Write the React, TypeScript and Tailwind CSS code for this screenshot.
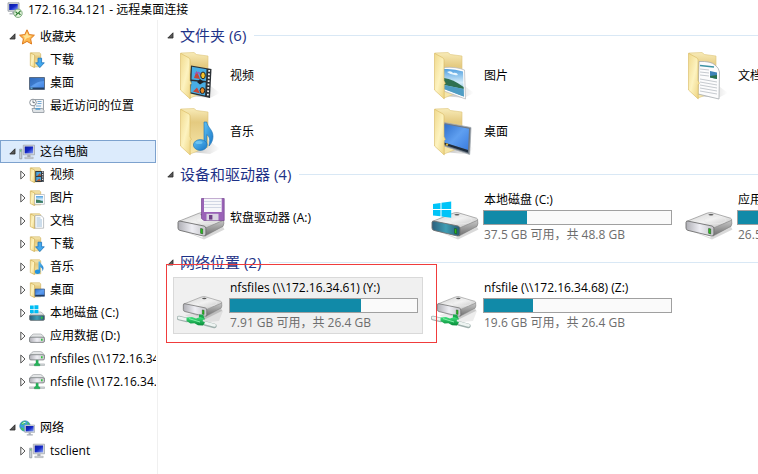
import type { ReactNode } from "react";
import clsx from "clsx";

/* ─── Shared gradients ─── */
function Gradients() {
  return (
    <svg className="absolute h-0 w-0" aria-hidden="true">
      <defs>
        <linearGradient id="flap" x1="0" y1="0" x2="1" y2="1">
          <stop offset="0" stopColor="#f0d98c" />
          <stop offset="0.5" stopColor="#fdf3c0" />
          <stop offset="1" stopColor="#ecd07a" />
        </linearGradient>
        <linearGradient id="back" x1="0" y1="0" x2="0" y2="1">
          <stop offset="0" stopColor="#f8ebb8" />
          <stop offset="0.3" stopColor="#e4ca80" />
          <stop offset="1" stopColor="#f8e9ae" />
        </linearGradient>
        <linearGradient id="screen" x1="0" y1="0" x2="1" y2="1">
          <stop offset="0" stopColor="#2f6fcb" />
          <stop offset="0.5" stopColor="#5f9ff0" />
          <stop offset="1" stopColor="#3a7ce0" />
        </linearGradient>
        <linearGradient id="monitor" x1="0" y1="0" x2="1" y2="1">
          <stop offset="0" stopColor="#0a1a9c" />
          <stop offset="0.5" stopColor="#1428c8" />
          <stop offset="1" stopColor="#8ba4f6" />
        </linearGradient>
        <linearGradient id="metal" x1="0" y1="0" x2="1" y2="1">
          <stop offset="0" stopColor="#cfcfcf" />
          <stop offset="0.5" stopColor="#f2f2f2" />
          <stop offset="1" stopColor="#b9b9b9" />
        </linearGradient>
        <linearGradient id="side" x1="0" y1="0" x2="0" y2="1">
          <stop offset="0" stopColor="#c9c9c9" />
          <stop offset="1" stopColor="#6f6f6f" />
        </linearGradient>
        <linearGradient id="front" x1="0" y1="0" x2="1" y2="0">
          <stop offset="0" stopColor="#aeaeb4" />
          <stop offset="0.5" stopColor="#eeeef4" />
          <stop offset="1" stopColor="#c4c4c8" />
        </linearGradient>
        <linearGradient id="teal" x1="0" y1="0" x2="1" y2="0">
          <stop offset="0" stopColor="#2c5f7c" />
          <stop offset="0.5" stopColor="#3e9db4" />
          <stop offset="1" stopColor="#2a5a70" />
        </linearGradient>
        <linearGradient id="sky" x1="0" y1="0" x2="0" y2="1">
          <stop offset="0" stopColor="#4f9fe0" />
          <stop offset="0.5" stopColor="#d3ecfa" />
          <stop offset="1" stopColor="#3d8fbe" />
        </linearGradient>
        <linearGradient id="shade" x1="0" y1="0" x2="1" y2="0">
          <stop offset="0" stopColor="#000" stopOpacity="0.25" />
          <stop offset="1" stopColor="#000" stopOpacity="0" />
        </linearGradient>
        <linearGradient id="note" x1="0" y1="0" x2="1" y2="1">
          <stop offset="0" stopColor="#5ec1f4" />
          <stop offset="1" stopColor="#1a78c8" />
        </linearGradient>
        <linearGradient id="pipe" x1="0" y1="0" x2="0" y2="1">
          <stop offset="0" stopColor="#3fe07c" />
          <stop offset="1" stopColor="#078a38" />
        </linearGradient>
      </defs>
    </svg>
  );
}

/* ─── Small icons (16px) ─── */
function Small({ children }: { children: ReactNode }) {
  return (
    <svg viewBox="0 0 16 16" className="h-4 w-4 shrink-0" aria-hidden="true">
      {children}
    </svg>
  );
}

function SmallFolder({ children }: { children: ReactNode }) {
  return (
    <Small>
      <path d="M2 .8h8.5l1.2 1v13H4z" fill="url(#back)" stroke="#cfae58" strokeWidth=".6" />
      <path d="M1.3.8 5.6 3v12.6L1.3 13.6z" fill="url(#flap)" stroke="#cda94b" strokeWidth=".6" />
      {children}
    </Small>
  );
}

const Star = () => (
  <Small>
    <path d="m8 .8 2.2 4.8 5.2.6-3.8 3.6 1 5.2L8 12.4 3.4 15l1-5.2L.6 6.2l5.2-.6z" fill="#fcb64e" stroke="#df7a1c" />
    <path d="m8 3 1.4 3.4 3.2.4-2.7 2L8 9 5 12l.7-3.2-2-2.2 2.7-.2z" fill="#ffe293" />
  </Small>
);
const DownloadSmall = () => (
  <SmallFolder>
    <path d="M9 6.2h3.6v4.6h2.7L10.8 15.6 6.6 10.8H9z" fill="#42a8ee" stroke="#1d73bd" strokeWidth=".8" />
  </SmallFolder>
);
const DesktopSmall = () => (
  <Small>
    <path d="M.5 2.5h15v12H.5z" fill="url(#screen)" stroke="#5a6c84" />
    <path d="M1 12.5h14v1.6H1z" fill="#234064" />
    <path d="M1.5 12.7h2v1h-2z" fill="#7fd5f5" />
    <path d="M1 3h14v3Q8 6 1 12z" fill="#2d68b8" opacity=".6" />
  </Small>
);
const RecentSmall = () => (
  <Small>
    <path d="M5.2 1.5h9.3v10.8H5.2z" fill="#f4f6f8" stroke="#9ba3aa" />
    <path d="M8.5 3.5h4M8.5 5.5h4M7 8h5" stroke="#76a9d3" />
    <path d="M3 10.5h10.5l1.5 2v2H4z" fill="#dfe3e6" stroke="#8d959d" strokeWidth=".8" />
    <path d="M6.5 10h4.8v1.8H6.5z" fill="#5a9fcf" />
    <circle cx="4" cy="4.5" r="3.3" fill="#fff" stroke="#8b9299" />
    <path d="M4 2.4v2.3h2" fill="none" stroke="#4a5862" strokeWidth=".8" />
  </Small>
);
const ComputerSmall = () => (
  <Small>
    <path d="M.7 5.2h2.1v9.6H.7z" fill="#d4d9dd" stroke="#838b93" strokeWidth=".7" />
    <path d="M1.2 6.2h1.1v1.2H1.2z" fill="#35bd57" />
    <path d="M4.3 1.2h11.2v9.6H4.3z" fill="#d7dade" stroke="#9a9fa6" strokeWidth=".7" />
    <path d="M5.7 2.5h8.4v6.9H5.7z" fill="url(#monitor)" />
    <path d="M8.3 10.8h3.2v2.4H8.3z" fill="#a8adb4" />
    <path d="M5.8 13.2h8.4v1.4H5.8z" fill="#d5d8db" stroke="#979ca3" strokeWidth=".5" />
  </Small>
);
const RemoteIcon = () => (
  <Small>
    <path d="M1 .8h11v8.4H1z" fill="#d7dade" stroke="#8f959d" strokeWidth=".8" />
    <path d="M2.2 2h8.6v6H2.2z" fill="url(#monitor)" />
    <path d="M5 9.2h3v2H5zM2.5 11h6v1.5h-6z" fill="#b7bcc2" />
    <circle cx="11" cy="11.3" r="4.2" fill="#e4f4dc" stroke="#58915a" strokeWidth=".7" />
    <path d="m8.5 9.6 2 2-2 2M13.5 8.9l-2 2 2 2" fill="none" stroke="#2d7b32" strokeWidth="1.2" />
  </Small>
);
const VideoSmall = () => (
  <SmallFolder>
    <path d="M6.2 4h8.6v11H6.2z" fill="#333a42" />
    <path d="M7.2 5h4.8v4H7.2zM7.2 10h4.8v4H7.2z" fill="#4aa6dc" />
    <path d="m8 9 3-3 1 3zM7.5 14l3-2.5 1.5 2.5z" fill="#b4572e" />
    <path d="M13.6 4.6v10" stroke="#e6e6e6" strokeWidth="1.1" strokeDasharray="1.2 1.2" />
  </SmallFolder>
);
const PictureSmall = () => (
  <SmallFolder>
    <path d="M5.6 4.5h9.8v9.8H5.6z" fill="#fff" stroke="#a4aab0" strokeWidth=".6" />
    <path d="M7 6h7v6.8H7z" fill="url(#sky)" />
    <path d="M7 9.6q3 0 7 2v1.2H7z" fill="#3e7c5c" />
  </SmallFolder>
);
const DocSmall = () => (
  <SmallFolder>
    <path d="M6 2.6h6l2.6 2.2v10.4H6z" fill="#fff" stroke="#a2a7ad" strokeWidth=".7" />
    <path d="M7.5 5h4M7.5 7h5.5M7.5 9h5.5M7.5 11h5.5M7.5 13h5.5" stroke="#8fb3d4" strokeWidth=".9" />
  </SmallFolder>
);
const MusicSmall = () => (
  <SmallFolder>
    <path d="M9.5 2.5h1.6c.2 2.8 3.4 3.6 3.4 6.6 0 1.4-.5 2.4-1.2 3.2.5-2.6-.5-3.6-2.1-4.4v4.5H9.5z" fill="url(#note)" />
    <ellipse cx="8.6" cy="12.7" rx="2.7" ry="2.2" fill="#2593dc" />
  </SmallFolder>
);
const DesktopFolderSmall = () => (
  <SmallFolder>
    <path d="M6 7h9.5v7.3H6z" fill="url(#screen)" stroke="#42597d" strokeWidth=".7" />
    <path d="M6.3 12.8h9v1.3h-9z" fill="#223d63" />
  </SmallFolder>
);

function SmallDrive({ y = 0, face = "url(#front)" }: { y?: number; face?: string }) {
  return (
    <g transform={`translate(0 ${y})`}>
      <path d="m3 4.8 1.6-.8h7l1.6.8 2.2 2.7v.8H.6v-.8z" fill="#e3e5e6" stroke="#9b9ea1" strokeWidth=".6" />
      <rect x=".5" y="7.2" width="15" height="5.2" rx="1.4" fill={face} stroke="#74787b" strokeWidth=".8" />
      <path d="M12 8.8h1.6v2H12z" fill="#2fc63c" />
    </g>
  );
}
const SystemDriveSmall = () => (
  <Small>
    <SmallDrive y={3} face="url(#teal)" />
    <path d="M1 .5h3.7v3.6H1zM5.4.2h4v3.9h-4zM1 4.8h3.7v3.4H1zM5.4 4.8h4v3.5h-4z" fill="#00bdf4" />
  </Small>
);
const DriveSmall = () => (
  <Small>
    <SmallDrive y={2} />
  </Small>
);
const NetDriveSmall = () => (
  <Small>
    <SmallDrive y={-3.5} />
    <path d="M.5 12.9h15v1.6H.5z" fill="#d3d7d9" stroke="#9aa1a4" strokeWidth=".5" />
    <path d="M7 9.2h2.2v3l1.6 1v1.6H5.4v-1.6l1.6-1z" fill="#24b65a" stroke="#188a45" strokeWidth=".4" />
  </Small>
);
const NetworkSmall = () => (
  <Small>
    <circle cx="6" cy="6" r="5.3" fill="#3ba0dc" stroke="#2a77a8" strokeWidth=".5" />
    <path d="M2 3.5Q4 .8 7 1.2L5.5 4 3 5zM1.6 7l3 1.4L5 11Q2 10 1.6 7zM8 2l2.4 1.5-1.6 1.8z" fill="#45c653" />
    <path d="M3.5 3.5q1.5-1.5 3-1" stroke="#d5f5ff" fill="none" />
    <path d="M5.8 5h9.8v7.4H5.8z" fill="#d7dbe0" stroke="#979da5" strokeWidth=".6" />
    <path d="M6.8 6h7.8v5.4H6.8z" fill="url(#monitor)" />
    <path d="M9.6 12.4h2.2v1.8h2v1.2H7.8v-1.2h1.8z" fill="#a9b0bc" />
  </Small>
);

/* ─── Large icons (48px) ─── */
function Large({ children }: { children: ReactNode }) {
  return (
    <svg viewBox="0 0 48 48" className="h-12 w-12 shrink-0" aria-hidden="true">
      {children}
    </svg>
  );
}

function LargeFolder({ children }: { children: ReactNode }) {
  return (
    <Large>
      <path d="M31 32 43 41 33 46 14 44z" fill="url(#shade)" />
      <path d="m4 1 13-.5 2.5 2L31 4v35L13 46z" fill="url(#back)" stroke="#dec478" strokeWidth=".6" />
      {children}
      <path d="M3.5 1.2 12 6q1 .6 1 2v20.5l1.4 3-1.2 1V47L3.5 38z" fill="url(#flap)" stroke="#d9b85f" strokeWidth=".6" />
    </Large>
  );
}

const VideoFolder = () => (
  <LargeFolder>
    <path d="M14 13.5 34.5 17 33 46 11 41z" fill="#2b3136" />
    <path d="M15 14.8 29.5 17.3 29 29 14.5 27.5zM14.5 29 28.8 30.6 28 43.6 13.5 40.2z" fill="#48aee4" />
    <path d="m17 26 2.5-7 2.5 5 1 3zM16 39.5l4-4 3 6z" fill="#c4463a" />
    <path d="M18 22q4-4 6 2" fill="none" stroke="#9a58b8" strokeWidth="1.5" />
    <ellipse cx="26" cy="23.4" rx="2.3" ry="3.4" fill="#f6c52c" stroke="#202428" strokeWidth="1" />
    <ellipse cx="25.4" cy="38.6" rx="2.3" ry="3" fill="#e28a27" stroke="#202428" strokeWidth="1" />
    <path d="m20 30 3-3 4 3-4 2.5z" fill="#202428" />
    <path d="M32.2 18 30.8 45" stroke="#f2f2f2" strokeWidth="1.8" strokeDasharray="1.8 1.6" />
  </LargeFolder>
);
const PictureFolder = () => (
  <LargeFolder>
    <path d="M13 15.5q12-1 20.5 2.5l1 29L13 39z" fill="#fcfcfc" stroke="#b1b6ba" strokeWidth=".7" />
    <path d="M13 17q10-.6 19 2.4l.8 25L13 37z" fill="url(#sky)" />
    <path d="M13 26q9 1 19.6 9l.1 2L13 33z" fill="#2f7050" />
    <path d="m13 33 19.7 4 .1 7.4L13 37z" fill="#4f9dc4" />
    <path d="M16 20q4-2 6 1 4-1 5 2-6 1-11-3z" fill="#eaf7fe" />
  </LargeFolder>
);
const DocFolder = () => (
  <LargeFolder>
    <path d="M14 9.5q12-.5 16 3.5 4 3 4.5 7L34 47 13 42z" fill="#fcfcfd" stroke="#a7acb0" strokeWidth=".8" />
    <path d="M15 13.5 29 15" stroke="#3c93a3" strokeWidth="1.6" />
    <path d="m15 17 9 1m-9 2 9 1m-9 2 9 1m-9 3 17 3m-17 0 17 3m-17 0 17 3m-17 0 17 3m-17 0 17 3" stroke="#b8bdc3" strokeWidth=".8" />
    <path d="m25 19 7 1.6V27l-7-1.6z" fill="#3e83b8" />
    <path d="m25 24 7-1v4l-7-1.6z" fill="#29704c" />
  </LargeFolder>
);
const MusicFolder = () => (
  <LargeFolder>
    <path d="M27 14h2.8C30.5 19.5 36 21.5 36 28.5c0 4-1.8 7-4 9.5 1.5-6 .5-9.6-2.2-11.4V37l-2.8 1z" fill="url(#note)" stroke="#176fb2" strokeWidth=".6" />
    <ellipse cx="23.3" cy="37" rx="6.9" ry="5.4" fill="url(#note)" stroke="#176fb2" strokeWidth=".6" />
    <ellipse cx="22" cy="34.5" rx="3.5" ry="1.6" fill="#7dcdf5" opacity=".7" />
  </LargeFolder>
);
const DesktopFolder = () => (
  <LargeFolder>
    <path d="m13 14.5 27 5L38.7 46.5 13 38z" fill="#6d7783" stroke="#a6adb4" strokeWidth=".8" />
    <path d="m13 16 25 4.8L37 42 13 34.5z" fill="url(#screen)" />
    <path d="m13 34.5 24 7.5-.1 2.6L13 36.6z" fill="#1d2c3d" />
    <circle cx="16" cy="36.6" r="1.2" fill="#d8b43c" />
  </LargeFolder>
);

function DriveBody({ face = "url(#front)" }: { face?: string }) {
  return (
    <g>
      <path d="m4 36 21 7.5L46 33l1.5 2.5L27 45.5z" fill="#000" opacity=".15" />
      <path d="m28 33 18.6-7q.8 4-.6 6.4L28 42z" fill="url(#side)" stroke="#777" strokeWidth=".6" />
      <path d="M1.5 27.4 22 19.2q2.5-.9 5-.5l18.5 5.5q2 1 .8 2.2L29 33.8z" fill="url(#metal)" stroke="#8d8d8d" strokeWidth=".7" />
      <ellipse cx="30" cy="26.2" rx="11" ry="3.6" fill="none" stroke="#e9e9e9" strokeWidth=".8" />
      <ellipse cx="26" cy="20.8" rx="2.6" ry=".8" fill="#555" />
      <path d="M1 28.4q.2-1.6 2-1.3L27 32q2 .6 1.9 2.6V40q-.1 2.6-2.6 2L3 36.4Q1 36 1 34z" fill={face} stroke="#717171" strokeWidth=".9" />
      <path d="m23.6 34.4 2.1.5v5l-2.1-.6z" fill="#27c41b" stroke="#1b3d18" strokeWidth=".5" />
    </g>
  );
}

const FloppyDrive = () => (
  <Large>
    <DriveBody />
    <path d="M24.5 4.5h22.7v22H27l-2.5-2z" fill="#9a63b7" stroke="#744590" strokeWidth=".7" />
    <path d="M27 4.5h17.7V18H27z" fill="#f6f7fa" />
    <path d="M27 7.5h17.7M27 10.5h17.7M27 13.5h17.7" stroke="#c8cede" strokeWidth=".8" />
    <path d="M29.5 19.8h12v6.5h-12z" fill="#d9d4e2" />
    <path d="M32 21h3.4v4.6H32z" fill="#6f4187" />
  </Large>
);
const SystemDrive = () => (
  <Large>
    <DriveBody face="url(#teal)" />
    <path d="m2 10 7.5-1.1V15H2zM10.5 8.7 20.2 7.4V15h-9.7zM2 16h7.5v6.3L2 21.4zM10.5 16h9.7v7.8l-9.7-1.3z" fill="#00c4f8" />
  </Large>
);
const Drive = () => (
  <Large>
    <DriveBody />
  </Large>
);
const NetDrive = () => (
  <Large>
    <path d="m8 33 32-7 6 3-4 10-20 2z" fill="#000" opacity=".07" />
    <g transform="translate(5.5 -1) scale(.84)">
      <DriveBody />
    </g>
    <path d="M22 32.5h4l2 5h-6z" fill="#1bab4e" />
    <path d="m2 36 8 2M28 41.5l9.5 2.5" stroke="#9fb0ad" strokeWidth="4.4" strokeLinecap="round" />
    <path d="m2 35.8 8 1.8M28 40.9l9.5 2.5" stroke="#eef4f2" strokeWidth="2.8" strokeLinecap="round" />
    <path d="m9.5 35.4 5.5-.4 4 1.4 4-1.4 4 1.4-1.5 2.6 2.5 1.5-2 3-5-.2-3.5-2-4 .2-4-2.4z" fill="url(#pipe)" />
    <path d="m12 36.6 11 3.4" stroke="#7ef0a6" />
  </Large>
);

/* ─── Sidebar ─── */
const tree = [
  {
    label: "收藏夹",
    Icon: Star,
    arrows: false,
    items: [
      { label: "下载", Icon: DownloadSmall },
      { label: "桌面", Icon: DesktopSmall },
      { label: "最近访问的位置", Icon: RecentSmall },
    ],
  },
  {
    label: "这台电脑",
    Icon: ComputerSmall,
    arrows: true,
    selected: true,
    items: [
      { label: "视频", Icon: VideoSmall },
      { label: "图片", Icon: PictureSmall },
      { label: "文档", Icon: DocSmall },
      { label: "下载", Icon: DownloadSmall },
      { label: "音乐", Icon: MusicSmall },
      { label: "桌面", Icon: DesktopFolderSmall },
      { label: "本地磁盘 (C:)", Icon: SystemDriveSmall },
      { label: "应用数据 (D:)", Icon: DriveSmall },
      { label: "nfsfiles (\\\\172.16.34.61) (Y:)", Icon: NetDriveSmall },
      { label: "nfsfile (\\\\172.16.34.68) (Z:)", Icon: NetDriveSmall },
    ],
  },
  {
    label: "网络",
    Icon: NetworkSmall,
    arrows: true,
    items: [{ label: "tsclient", Icon: ComputerSmall }],
  },
];

function OpenArrow() {
  return (
    <svg viewBox="0 0 7 7" className="h-[7px] w-[7px] shrink-0" aria-hidden="true">
      <path d="M6 .8V6H.8z" fill="#595959" stroke="#262626" strokeWidth=".8" />
    </svg>
  );
}

function ClosedArrow() {
  return (
    <svg viewBox="0 0 6 10" className="h-[10px] w-[6px] shrink-0" aria-hidden="true">
      <path d="M.8 1 5 5 .8 9z" fill="#fff" stroke="#555" />
    </svg>
  );
}

function Sidebar() {
  return (
    <nav className="flex w-[158px] shrink-0 flex-col gap-[23px] border-r border-[#f0f0f0] pt-[5px] pr-px">
      {tree.map((group) => (
        <ul key={group.label}>
          <li>
            <button
              className={clsx(
                "flex h-[23px] w-full items-center border pl-2 text-left whitespace-nowrap",
                group.selected ? "border-[#7da2ce] bg-[#dcebfc]" : "border-transparent"
              )}
            >
              <OpenArrow />
              <span className="flex items-center gap-[5px] pl-[3px]">
                <group.Icon />
                {group.label}
              </span>
            </button>
          </li>
          {group.items.map((item) => (
            <li key={item.label}>
              <button className="flex h-[23px] w-full items-center gap-[3px] overflow-hidden pl-5 text-left whitespace-nowrap">
                {group.arrows ? <ClosedArrow /> : <span className="w-[6px]" />}
                <span className="flex items-center gap-[5px]">
                  <item.Icon />
                  {item.label}
                </span>
              </button>
            </li>
          ))}
        </ul>
      ))}
    </nav>
  );
}

/* ─── Content ─── */
const folders = [
  { label: "视频", Icon: VideoFolder },
  { label: "图片", Icon: PictureFolder },
  { label: "文档", Icon: DocFolder },
  { label: "音乐", Icon: MusicFolder },
  { label: "桌面", Icon: DesktopFolder },
];

type Volume = { label: string; Icon: () => ReactNode; used?: number; info?: string; selected?: boolean };

const drives: Volume[] = [
  { label: "软盘驱动器 (A:)", Icon: FloppyDrive },
  { label: "本地磁盘 (C:)", Icon: SystemDrive, used: 23, info: "37.5 GB 可用，共 48.8 GB" },
  { label: "应用数据 (D:)", Icon: Drive, used: 47, info: "26.5 GB 可用，共 50.0 GB" },
];

const shares: Volume[] = [
  { label: "nfsfiles (\\\\172.16.34.61) (Y:)", Icon: NetDrive, used: 70, info: "7.91 GB 可用，共 26.4 GB", selected: true },
  { label: "nfsfile (\\\\172.16.34.68) (Z:)", Icon: NetDrive, used: 26, info: "19.6 GB 可用，共 26.4 GB" },
];

function Section({ title, children }: { title: string; children: ReactNode }) {
  return (
    <section>
      <h2 className="flex h-[26px] items-center text-[15px] text-[#1e3287]">
        <button className="flex shrink-0 items-center gap-[6px] pl-[9px] whitespace-nowrap">
          <OpenArrow />
          {title}
        </button>
        <span className="ml-2 h-px flex-1 bg-[#d9e8f5]" />
      </h2>
      {children}
    </section>
  );
}

function VolumeTile({ label, Icon, used, info, selected }: Volume) {
  return (
    <li className="relative">
      <button
        className={clsx(
          "flex h-[57px] w-full items-center gap-1 border pr-1 pl-[3px] text-left whitespace-nowrap",
          selected ? "border-[#d9d9d9] bg-[#f0f0f0]" : "border-transparent"
        )}
      >
        <Icon />
        <span className="flex-1">
          <span className="block pl-px leading-5">{label}</span>
          {used !== undefined && (
            <>
              <span className="block h-[15px] border border-[#a0a0a0] bg-[#fafafa]">
                <span className="block h-full bg-[#118aa8]" style={{ width: `${used}%` }} />
              </span>
              <span className="block pl-px leading-5 text-[#6d6d6d]">{info}</span>
            </>
          )}
        </span>
      </button>
      {/* Highlight frame */}
      {selected && (
        <span className="pointer-events-none absolute -top-[13px] -right-[14px] -bottom-[9px] -left-[7px] z-10 border border-[#f03c3c]" />
      )}
    </li>
  );
}

function VolumeGrid({ items }: { items: Volume[] }) {
  return (
    <ul className="grid grid-cols-[repeat(3,250px)] gap-x-1 pt-[2px] pl-[15px]">
      {items.map((item) => (
        <VolumeTile key={item.label} {...item} />
      ))}
    </ul>
  );
}

export default function App() {
  return (
    <div className="min-h-screen overflow-hidden bg-white font-['Open_Sans','Noto_Sans_CJK_SC',sans-serif] text-[12px] text-black">
      <Gradients />
      <header className="flex h-5 items-center gap-[5px] pl-[7px]">
        <RemoteIcon />
        <h1>172.16.34.121 - 远程桌面连接</h1>
      </header>
      <div className="flex min-h-[calc(100vh-20px)]">
        <Sidebar />
        <main className="min-w-0 flex-1 overflow-hidden pt-[2px]">
          <Section title="文件夹 (6)">
            <ul className="grid grid-cols-[repeat(3,250px)] gap-x-1 pb-px pl-[15px]">
              {folders.map(({ label, Icon }) => (
                <li key={label}>
                  <button className="flex h-14 w-full items-center gap-[5px] pl-1 text-left">
                    <Icon />
                    {label}
                  </button>
                </li>
              ))}
            </ul>
          </Section>
          <Section title="设备和驱动器 (4)">
            <VolumeGrid items={drives} />
          </Section>
          <div className="pt-[3px]">
            <Section title="网络位置 (2)">
              <VolumeGrid items={shares} />
            </Section>
          </div>
        </main>
      </div>
    </div>
  );
}
